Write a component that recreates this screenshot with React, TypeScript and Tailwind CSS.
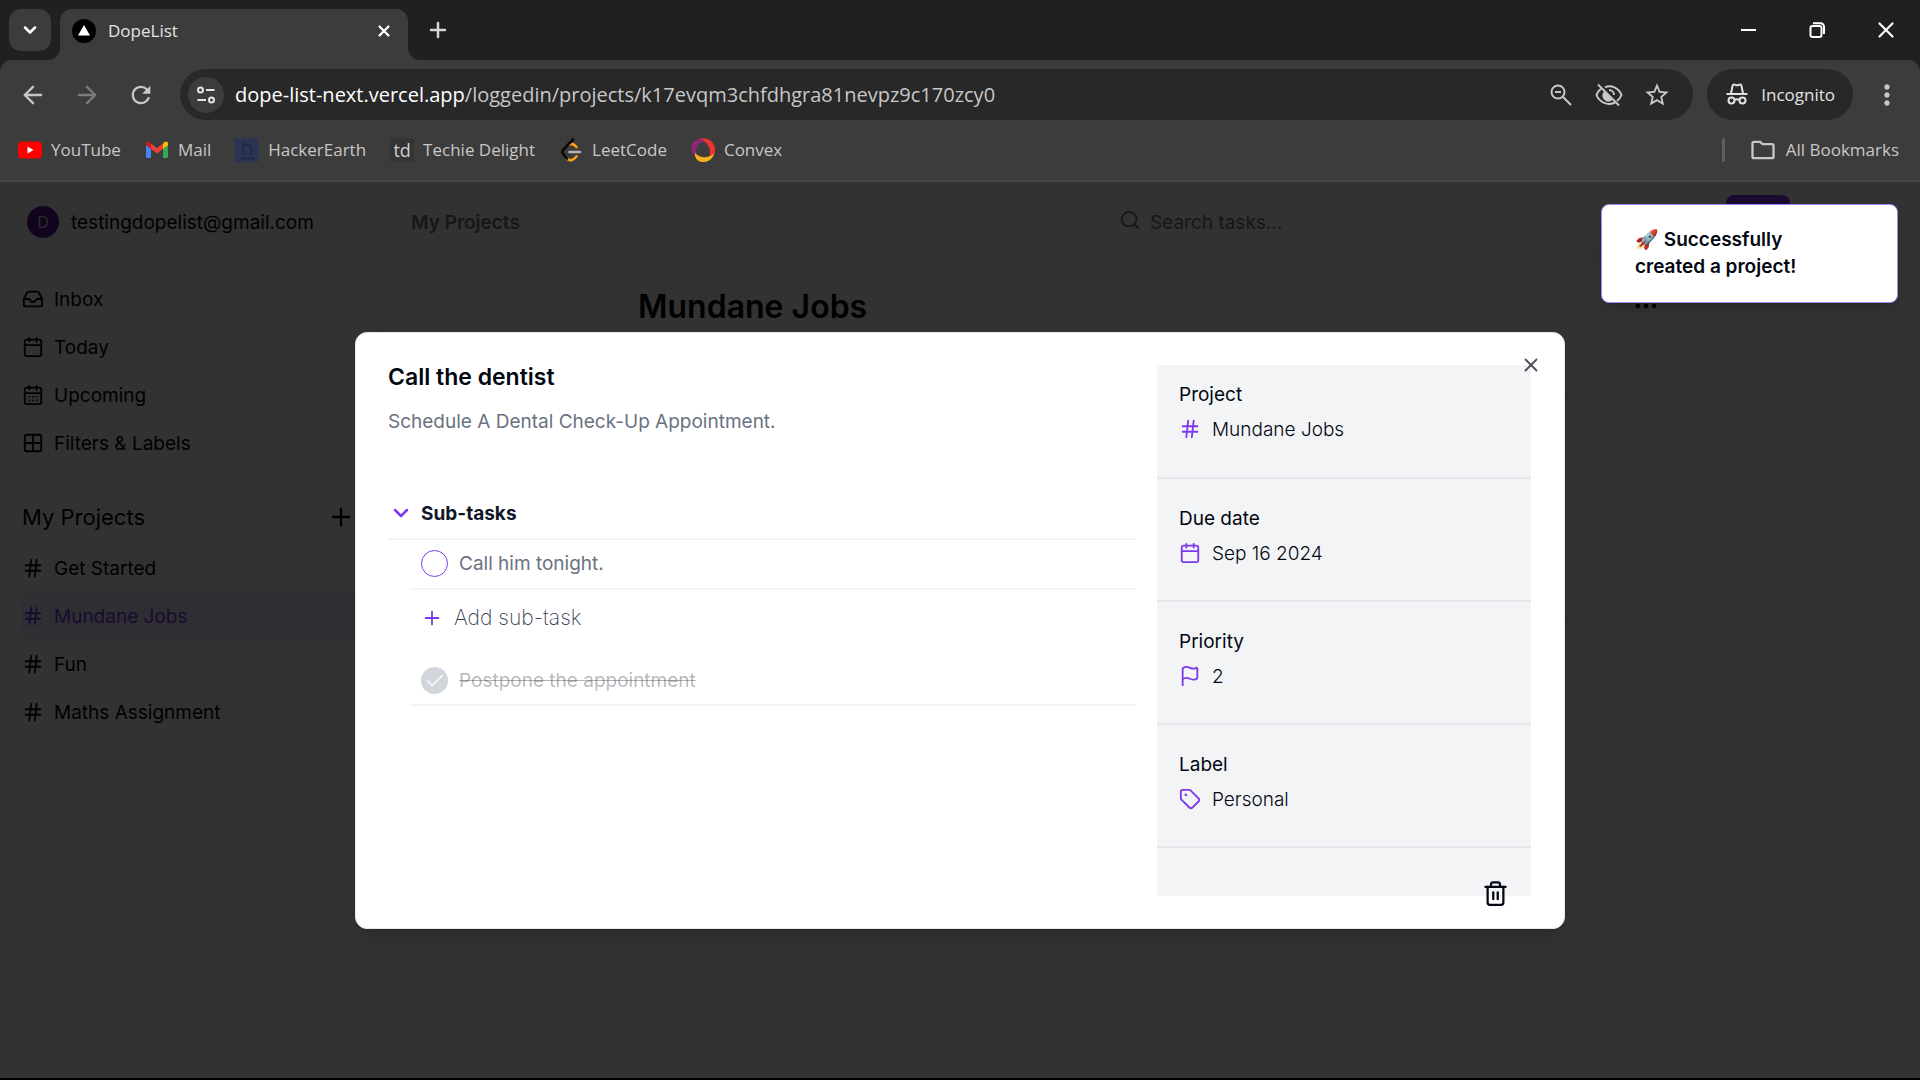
import type { ReactNode } from "react";
import {
  ArrowLeft,
  ArrowRight,
  Calendar,
  CalendarDays,
  Check,
  ChevronDown,
  Ellipsis,
  Flag,
  Grid2X2,
  Hash,
  Inbox,
  Plus,
  Search,
  Tag,
  Trash2,
  X,
} from "lucide-react";
import {
  MdMoreVert,
  MdOutlineFolder,
  MdOutlineStarBorder,
  MdRefresh,
} from "react-icons/md";

const navItems = [
  { name: "Inbox", icon: Inbox },
  { name: "Today", icon: Calendar },
  { name: "Upcoming", icon: CalendarDays },
  { name: "Filters & Labels", icon: Grid2X2 },
];

const projects = ["Get Started", "Mundane Jobs", "Fun", "Maths Assignment"];

const details = [
  { label: "Project", value: "Mundane Jobs", icon: Hash },
  { label: "Due date", value: "Sep 16 2024", icon: Calendar },
  { label: "Priority", value: "2", icon: Flag },
  { label: "Label", value: "Personal", icon: Tag },
];

function YoutubeIcon() {
  return (
    <svg viewBox="0 0 24 24" className="size-6">
      <rect x="0" y="3.500" width="24" height="17" rx="4" fill="#ff0000" />
      <path d="M9.500 8.500v7l6-3.500z" fill="#fff" />
    </svg>
  );
}

function GmailIcon() {
  return (
    <svg viewBox="0 0 24 24" className="size-6">
      <path d="M1 6v12.500a1.500 1.500 0 0 0 1.500 1.500H6v-10z" fill="#4285f4" />
      <path d="M18 10v10h3.500a1.500 1.500 0 0 0 1.500-1.500V6z" fill="#34a853" />
      <path d="M18 5.500V11l5-3.800V5.500c0-2-2.200-2.700-3.800-1.300z" fill="#fbbc04" />
      <path d="M6 11V5.500l6 4.500 6-4.500V11l-6 4.500z" fill="#ea4335" />
      <path d="M1 5.500v1.700L6 11V5.500L4.800 4.200C3.200 2.800 1 3.500 1 5.500z" fill="#c5221f" />
    </svg>
  );
}

function HackerEarthIcon() {
  return (
    <svg viewBox="0 0 24 24" className="size-6">
      <rect width="24" height="24" rx="1" fill="#2c3454" />
      <path
        d="M8 3v14M8 9c1-3 8-4 8 1v7M5 20.500h14"
        fill="none"
        stroke="#232a45"
        strokeWidth="2"
      />
    </svg>
  );
}

function TechieIcon() {
  return (
    <span className="flex size-6 items-center justify-center bg-[#343434] text-lg leading-6 font-medium text-[#d0d0d0]">
      td
    </span>
  );
}

function LeetCodeIcon() {
  return (
    <svg viewBox="0 0 24 24" className="size-6" fill="none" strokeLinecap="round">
      <path d="M10.500 6.500c2.500-1.500 4.500-.5 7 2.500" stroke="#ffa116" strokeWidth="2.600" />
      <path d="M8 20.500c3 3 6 2 9.500-2" stroke="#ffa116" strokeWidth="2.600" />
      <path
        d="M14 1.500 4.500 11.500c-1.300 1.500-1.300 3.500 0 5L8 20.500"
        stroke="#070706"
        strokeWidth="2.600"
      />
      <path d="M10.500 14h10.500" stroke="#b3b3b3" strokeWidth="2.600" />
    </svg>
  );
}

function ConvexIcon() {
  return (
    <svg viewBox="0 0 24 24" className="size-6">
      <path
        d="M8 1C15-1.500 24 3 24 12c0 2-.6 4-1.800 5.500C21 19 19 19 18.500 17.500 20.500 12 17 3 8 1z"
        fill="#ee342f"
      />
      <path
        d="M6 20C-1 16-2 5 6 1.500c3-1 6 0 8 2C8 4 2.500 10 6 20z"
        fill="#8d2676"
      />
      <path
        d="M4 14.500C8 20.500 17 21 23.500 15 22 21 17 24.500 11 24 6.500 23.500 3.500 20 4 14.500z"
        fill="#f3b01c"
      />
    </svg>
  );
}

function IncognitoIcon() {
  return (
    <svg viewBox="0 0 24 24" className="size-6 text-[#e3e3e3]" fill="none" stroke="currentColor" strokeWidth="2">
      <path d="M1.500 11h21" />
      <path d="M6 10.500 7.500 3c.3-1.300 1.200-1.800 2.300-1.300l1.200.5h2l1.200-.5c1.100-.5 2 0 2.300 1.300L18 10.500" />
      <circle cx="6.500" cy="17.500" r="3" />
      <circle cx="17.500" cy="17.500" r="3" />
      <path d="M9.500 17c1.500-1 3.500-1 5 0" />
    </svg>
  );
}

function TuneIcon() {
  return (
    <svg viewBox="0 0 20 20" className="size-5 text-[#e3e3e3]" fill="none" stroke="currentColor" strokeWidth="2">
      <circle cx="4.500" cy="5" r="2.500" />
      <path d="M10 5h8.500M1.500 15H10" />
      <circle cx="15.500" cy="15" r="2.500" />
    </svg>
  );
}

function ZoomOutIcon() {
  return (
    <svg viewBox="0 0 24 24" className="size-6" fill="none" stroke="currentColor" strokeWidth="2">
      <circle cx="9" cy="9" r="6.500" />
      <path d="m14 14 8 8M6 9h6" />
    </svg>
  );
}

function EyeOffIcon() {
  return (
    <svg viewBox="0 0 28 24" className="h-6 w-7" fill="none" stroke="currentColor" strokeWidth="2">
      <path d="M10 4.200C17 1.500 24 5.500 26.500 12c-1 2.500-2.500 4.500-4.500 6" />
      <path d="M6 5.800C4 7.300 2.500 9.300 1.500 12c3 7.500 11 11 18.500 7.500" />
      <path d="M14 7a5 5 0 0 1 5 5" />
      <path d="M9.500 9.500a5 5 0 0 0 7 7z" fill="currentColor" />
      <path d="m3 1.500 21 21" />
    </svg>
  );
}

function RestoreIcon() {
  return (
    <svg viewBox="0 0 16 16" className="size-4" fill="none" stroke="currentColor" strokeWidth="2">
      <rect x="1.500" y="4" width="11" height="11" rx="2" />
      <path d="M4 1.200h7.500a3.500 3.500 0 0 1 3.500 3.500V12" />
    </svg>
  );
}

const bookmarks = [
  { name: "YouTube", icon: <YoutubeIcon /> },
  { name: "Mail", icon: <GmailIcon /> },
  { name: "HackerEarth", icon: <HackerEarthIcon /> },
  { name: "Techie Delight", icon: <TechieIcon /> },
  { name: "LeetCode", icon: <LeetCodeIcon /> },
  { name: "Convex", icon: <ConvexIcon /> },
];

function IconButton({ label, children }: { label: string; children: ReactNode }) {
  return (
    <button aria-label={label} className="flex size-7 items-center justify-center">
      {children}
    </button>
  );
}

function TabStrip() {
  return (
    <div className="flex h-[60px] items-end bg-[#1f2120] pl-[9px] text-white">
      <button
        aria-label="Search tabs"
        className="mb-[9px] flex size-[42px] items-center justify-center rounded-xl bg-[#3c3c3c]"
      >
        <ChevronDown className="size-5" strokeWidth={3} />
      </button>
      <div className="relative ml-[9px] flex h-[51px] w-[348px] items-center rounded-t-xl bg-[#3c3c3c] px-3 pb-2">
        <svg viewBox="0 0 12 12" className="absolute bottom-0 -left-3 size-3">
          <path d="M12 0v12H0A12 12 0 0 0 12 0z" fill="#3c3c3c" />
        </svg>
        <svg viewBox="0 0 12 12" className="absolute -right-3 bottom-0 size-3">
          <path d="M0 0v12h12A12 12 0 0 1 0 0z" fill="#3c3c3c" />
        </svg>
        <svg viewBox="0 0 24 24" className="size-6">
          <circle cx="12" cy="12" r="12" fill="#000" />
          <path d="m12 6 6 10.500H6z" fill="#fff" />
        </svg>
        <span className="ml-3 flex-1 text-[17px] text-[#e3e3e3]">DopeList</span>
        <button aria-label="Close tab" className="flex size-6 items-center justify-center">
          <X className="size-[18px]" strokeWidth={3} />
        </button>
      </div>
      <button aria-label="New tab" className="mb-[18px] ml-[18px] flex size-6 items-center justify-center text-[#d5d5d5]">
        <Plus className="size-6" strokeWidth={2.5} />
      </button>
      <div className="mb-[18px] ml-auto flex items-center gap-[45px] pr-[22px]">
        <button aria-label="Minimize" className="flex size-6 items-center justify-center">
          <span className="h-[2px] w-[15px] bg-white" />
        </button>
        <button aria-label="Restore" className="flex size-6 items-center justify-center">
          <RestoreIcon />
        </button>
        <button aria-label="Close" className="flex size-6 items-center justify-center">
          <X className="size-[26px] shrink-0" strokeWidth={2} />
        </button>
      </div>
    </div>
  );
}

function Toolbar() {
  return (
    <div className="bg-[#1f2120]">
      <div className="rounded-t-xl border-b-2 border-[#474747] bg-[#3c3c3c] pt-[9px]">
        <div className="flex h-[51px] items-center pr-[19px] pl-[19px] text-[#c7c7c7]">
          <div className="flex gap-[26px]">
            <IconButton label="Back">
              <ArrowLeft className="size-7" strokeWidth={2} />
            </IconButton>
            <IconButton label="Forward">
              <ArrowRight className="size-7 text-[#7c7c7c]" strokeWidth={2} />
            </IconButton>
            <IconButton label="Reload">
              <MdRefresh className="size-7" />
            </IconButton>
          </div>
          <div className="ml-[25px] flex h-full flex-1 items-center rounded-full bg-[#282828] pr-[22px] pl-2">
            <button
              aria-label="View site information"
              className="flex size-9 items-center justify-center rounded-full bg-[#3c3c3c]"
            >
              <TuneIcon />
            </button>
            <p className="ml-[11px] flex-1 text-xl text-[#c7c7c7]">
              <span className="text-white">dope-list-next.vercel.app</span>
              /loggedin/projects/k17evqm3chfdhgra81nevpz9c170zcy0
            </p>
            <div className="flex gap-5">
              <IconButton label="Zoom">
                <ZoomOutIcon />
              </IconButton>
              <IconButton label="Third-party cookies blocked">
                <EyeOffIcon />
              </IconButton>
              <IconButton label="Bookmark this tab">
                <MdOutlineStarBorder className="size-7" />
              </IconButton>
            </div>
          </div>
          <div className="ml-[14px] flex h-full items-center gap-3 rounded-full bg-[#282828] px-[18px] text-[17px] text-[#e3e3e3]">
            <IncognitoIcon />
            Incognito
          </div>
          <div className="ml-5">
            <IconButton label="Menu">
              <MdMoreVert className="size-8 shrink-0" />
            </IconButton>
          </div>
        </div>
        <div className="flex h-[60px] items-center gap-6 pr-[21px] pl-[18px] text-[17px] text-[#c7c7c7]">
          {bookmarks.map((bookmark) => (
            <a key={bookmark.name} href="#" className="flex items-center gap-[9px]">
              {bookmark.icon}
              {bookmark.name}
            </a>
          ))}
          <div className="ml-auto h-6 w-[3px] rounded-full bg-[#5e5e5e]" />
          <button className="flex items-center gap-[9px]">
            <MdOutlineFolder className="size-7" />
            All Bookmarks
          </button>
        </div>
      </div>
    </div>
  );
}

function Sidebar() {
  return (
    <aside className="w-[378px] shrink-0 border-r border-gray-200 bg-gray-50">
      <div className="flex h-[81px] items-center border-b border-gray-200 px-[11px]">
        <button className="flex h-[54px] w-full items-center gap-3 rounded-lg px-4">
          <span className="flex size-8 items-center justify-center rounded-full bg-purple-900 text-base text-gray-300">
            D
          </span>
          testingdopelist@gmail.com
        </button>
      </div>
      <nav className="px-[22px] pt-3">
        {navItems.map(({ name, icon: Icon }) => (
          <a key={name} href="#" className="flex h-12 items-center gap-[10px]">
            <Icon className="size-[22px]" />
            {name}
          </a>
        ))}
        <div className="mt-[23px] flex h-[54px] items-center justify-between text-[22px]">
          <p>My Projects</p>
          <button aria-label="Add project">
            <Plus className="size-7" />
          </button>
        </div>
        {projects.map((name) => (
          <a
            key={name}
            href="#"
            className={
              name === "Mundane Jobs"
                ? "flex h-12 items-center gap-[10px] rounded-xl bg-[#7c3aed]/10 text-[#7c3aed]"
                : "flex h-12 items-center gap-[10px]"
            }
          >
            <Hash className="size-[22px]" />
            {name}
          </a>
        ))}
      </nav>
    </aside>
  );
}

function ProjectPage() {
  return (
    <div className="flex flex-1 flex-col bg-gray-50">
      <header className="flex h-[81px] items-center justify-between border-b border-gray-200 pr-[130px] pl-[33px]">
        <p className="font-semibold text-gray-500">My Projects</p>
        <div className="flex gap-3">
          <label className="flex h-[54px] w-[609px] items-center gap-[9px] rounded-lg border border-gray-200 px-[13px]">
            <Search className="mb-1 size-[22px] text-gray-500" />
            <input
              type="search"
              aria-label="Search tasks"
              placeholder="Search tasks..."
              className="flex-1 outline-none placeholder:text-gray-500"
            />
          </label>
          <button aria-label="Add task" className="h-[54px] w-16 rounded-lg bg-[#7c3aed]" />
        </div>
      </header>
      <main className="px-[260px] pt-[21px]">
        <div className="flex h-11 items-center justify-between">
          <h1 className="text-[32px] font-semibold">Mundane Jobs</h1>
          <button aria-label="Project options">
            <Ellipsis className="size-7" />
          </button>
        </div>
        <ul>
          <li className="h-[72px] border-b-2 border-gray-100" />
          <li className="h-[137px] border-b-2 border-gray-100" />
          <li className="h-[85px] border-b-2 border-gray-100" />
        </ul>
      </main>
    </div>
  );
}

function TaskDialog() {
  return (
    <div
      role="dialog"
      aria-label="Call the dentist"
      className="relative flex w-[1210px] gap-[21px] rounded-xl border border-gray-200 bg-white py-8 pr-[33px] pl-8 text-gray-950 shadow-lg"
    >
      <div className="flex-1">
        <h2 className="text-[23px] leading-6 font-semibold">Call the dentist</h2>
        <p className="mt-[19px] text-gray-500">Schedule A Dental Check-Up Appointment.</p>
        <div className="mt-[65px] flex items-center gap-2 border-b-2 border-gray-100 pb-[11px] pl-px">
          <ChevronDown className="size-6 text-[#7c3aed]" strokeWidth={2.5} />
          <p className="font-bold text-gray-900">Sub-tasks</p>
        </div>
        <label className="ml-[22px] flex h-[50px] items-center gap-[11px] border-b-2 border-gray-100 pl-[11px] text-gray-500">
          <input type="checkbox" className="size-[27px] appearance-none rounded-full border border-[#7c3aed]" />
          Call him tonight.
        </label>
        <button className="ml-[33px] flex h-14 items-center gap-[11px] text-[21px] font-extralight text-gray-700">
          <Plus className="size-[22px] text-[#7c3aed]" />
          Add sub-task
        </button>
        <label className="ml-[22px] flex h-[60px] items-center gap-[11px] border-b-2 border-gray-100 pt-3 pl-[11px] text-gray-950/30 line-through">
          <span className="relative flex size-[27px] items-center justify-center rounded-full bg-gray-300">
            <input type="checkbox" defaultChecked className="absolute inset-0 appearance-none" />
            <Check className="size-[22px] text-white" strokeWidth={1.5} />
          </span>
          Postpone the appointment
        </label>
      </div>
      <div className="flex w-[374px] flex-col bg-gray-100">
        {details.map(({ label, value, icon: Icon }) => (
          <div
            key={label}
            className="h-[123px] border-b-2 border-gray-200 px-[22px] pt-[26px] first:h-[114px] first:pt-4"
          >
            <p>{label}</p>
            <p className="mt-2 flex items-center gap-[11px] font-light">
              <Icon className="size-[22px] text-[#7c3aed]" />
              {value}
            </p>
          </div>
        ))}
        <div className="flex h-12 justify-end pt-8 pr-[22px]">
          <button aria-label="Delete task" className="h-7">
            <Trash2 className="size-[27px]" />
          </button>
        </div>
      </div>
      <button aria-label="Close" className="absolute top-[21px] right-[22px] opacity-70">
        <X className="size-[22px]" />
      </button>
    </div>
  );
}

function Toast() {
  return (
    <div
      role="status"
      className="absolute top-[22px] right-[22px] w-[297px] rounded-lg border border-violet-400 bg-white px-[33px] pt-[21px] pb-[22px] font-semibold text-gray-950 shadow-lg"
    >
      🚀 Successfully
      <br />
      created a project!
    </div>
  );
}

export default function App() {
  return (
    <div className="flex min-h-screen flex-col">
      <div className="font-['Open_Sans',sans-serif]">
        <TabStrip />
        <Toolbar />
      </div>
      <div className="relative flex flex-1 border-b-2 border-black font-['Inter',sans-serif] text-[19px] leading-[27px]">
        <Sidebar />
        <ProjectPage />
        <div className="absolute inset-0 flex items-center justify-center bg-black/80">
          <TaskDialog />
        </div>
        <Toast />
      </div>
    </div>
  );
}
